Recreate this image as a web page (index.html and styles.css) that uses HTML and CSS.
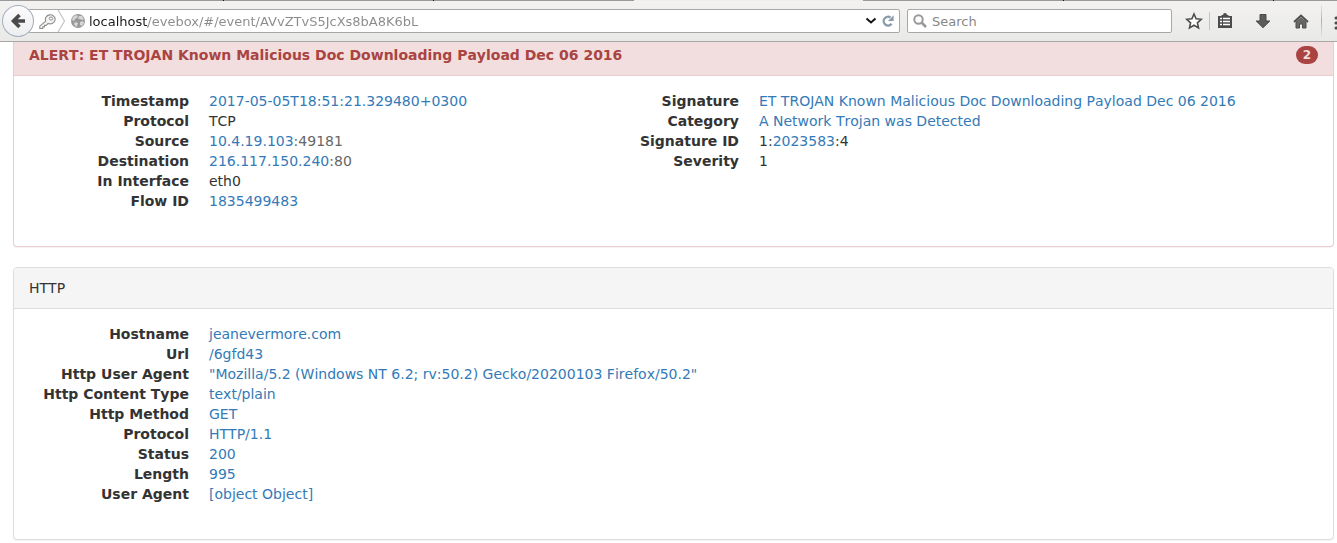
FILE: index.html
```html
<!DOCTYPE html>
<html lang="en">
<head>
<meta charset="utf-8">
<title>EveBox event</title>
<link rel="stylesheet" href="styles.css">
</head>
<body>
<header class="chrome">
  <div class="tabstrip"><span class="tab"></span><span class="tab"></span><span class="tab tab-before"></span><span class="tab tab-active"></span><span class="tab tab-after"></span><span class="tab"></span><span class="tab tab-last"></span></div>
  <div class="toolbar">
    <button class="back" aria-label="Back"><svg width="32" height="32" viewBox="0 0 32 32"><path d="M23 16H12M17.500 10l-6 6 6 6" fill="none" stroke="#4a4a4a" stroke-width="3.600"/></svg></button>
    <div class="urlbar">
      <svg class="key" width="18" height="18" viewBox="0 0 18 18"><path d="M7.800 9.200 1.800 14.200v2.300h3v-1.600h1.700v-1.500h1.700l2-2a4.900 4.500 0 1 0-2.400-2.200Z" fill="#f3f3f3" stroke="#8c8c8c" stroke-width="1.100" stroke-linejoin="round"/><ellipse cx="13" cy="6.500" rx="1.700" ry="1.500" fill="#fff" stroke="#8c8c8c"/></svg>
      <svg class="chevron" width="9" height="22" viewBox="0 0 9 22"><path d="M1 0l6.500 11L1 22" fill="none" stroke="#c4c4c4" stroke-width="1.200"/></svg>
      <svg class="globe" width="14" height="14" viewBox="0 0 14 14"><circle cx="7" cy="7" r="7" fill="#999"/><path d="M2 3l3-2 2 1-1 2-2 1-1 2-2-1zM8 2l3 0 2 3-2 1-2-1-2 0zM4 8l3 1-1 3-1 1-2-3zM9 8l3-1 1 2-2 3-2-1z" fill="#d6d6d6"/></svg>
      <input class="url" type="text" aria-label="Address" value="localhost/evebox/#/event/AVvZTvS5JcXs8bA8K6bL">
      <button class="mini" aria-label="History"><svg width="12" height="8" viewBox="0 0 12 8"><path d="M1.500 1.500l4.500 4 4.500-4" fill="none" stroke="#111" stroke-width="1.900"/></svg></button>
      <button class="mini" aria-label="Reload"><svg width="12" height="12" viewBox="0 0 12 12"><path d="M9.600 8.800A4.400 4.400 0 1 1 8.500 2.500" fill="none" stroke="#8c9bab" stroke-width="2.300"/><path d="M11.600.3v5.600H6z" fill="#8c9bab"/></svg></button>
    </div>
    <div class="searchbox">
      <svg width="14" height="14" viewBox="0 0 14 14"><circle cx="5.500" cy="5.500" r="4.200" fill="none" stroke="#999" stroke-width="2"/><path d="M8.500 8.500l4.500 4.500" stroke="#999" stroke-width="2.600"/></svg>
      <input class="search" type="text" placeholder="Search" aria-label="Search">
    </div>
    <button class="tool tool-star" aria-label="Bookmark"><svg width="18" height="18" viewBox="0 0 18 18"><path d="M9 2l2.100 4.800 5.200.5-3.900 3.500 1.100 5.100L9 13.200l-4.500 2.700 1.100-5.100L1.700 7.300l5.200-.5z" fill="#fff" stroke="#4c4c4c" stroke-width="1.600"/></svg></button>
    <span class="sep"></span>
    <button class="tool tool-list" aria-label="Bookmarks list"><svg width="16" height="16" viewBox="0 0 16 16"><path d="M1 3h3.500V2H6a2 2 0 0 1 4 0h1.500v1H15v12H1z" fill="#4c4c4c"/><path d="M3 5.500h2M6 5.500h7M3 8.500h2M6 8.500h7M3 11.500h2M6 11.500h7" stroke="#fff" stroke-width="1.500"/></svg></button>
    <button class="tool" aria-label="Downloads"><svg width="16" height="16" viewBox="0 0 16 16"><path d="M5 1.500h6V8h3.800L8 14.700 1.200 8H5z" fill="#5c5c5c" stroke="#484848"/></svg></button>
    <button class="tool" aria-label="Home"><svg width="16" height="16" viewBox="0 0 16 16"><path d="M1 9l7-6.500L15 9" fill="none" stroke="#4c4c4c" stroke-width="1.800"/><path d="M3 9.200l5-4.500 5 4.500V15H9.500v-4h-3v4H3z" fill="#666" stroke="#4c4c4c"/></svg></button>
    <span class="sep sep-tall"></span>
    <button class="menu" aria-label="Menu"><svg width="18" height="16" viewBox="0 0 18 16"><path d="M2 3h14M2 8h14M2 13h14" stroke="#4c4c4c" stroke-width="3" stroke-linecap="round"/></svg></button>
  </div>
</header>
<main class="content">
  <section class="panel panel-danger">
    <div class="panel-heading"><strong>ALERT: ET TROJAN Known Malicious Doc Downloading Payload Dec 06 2016</strong><span class="badge">2</span></div>
    <div class="panel-body columns">
      <dl class="fields">
        <dt>Timestamp</dt><dd><a href="#">2017-05-05T18:51:21.329480+0300</a></dd>
        <dt>Protocol</dt><dd>TCP</dd>
        <dt>Source</dt><dd class="muted"><a href="#">10.4.19.103</a>:<a class="port" href="#">49181</a></dd>
        <dt>Destination</dt><dd class="muted"><a href="#">216.117.150.240</a>:<a class="port" href="#">80</a></dd>
        <dt>In Interface</dt><dd>eth0</dd>
        <dt>Flow ID</dt><dd><a href="#">1835499483</a></dd>
      </dl>
      <dl class="fields">
        <dt>Signature</dt><dd><a href="#">ET TROJAN Known Malicious Doc Downloading Payload Dec 06 2016</a></dd>
        <dt>Category</dt><dd><a href="#">A Network Trojan was Detected</a></dd>
        <dt>Signature ID</dt><dd>1:<a href="#">2023583</a>:4</dd>
        <dt>Severity</dt><dd>1</dd>
      </dl>
    </div>
  </section>
  <section class="panel">
    <div class="panel-heading">HTTP</div>
    <div class="panel-body">
      <dl class="fields">
        <dt>Hostname</dt><dd><a href="#">jeanevermore.com</a></dd>
        <dt>Url</dt><dd><a href="#">/6gfd43</a></dd>
        <dt>Http User Agent</dt><dd><a href="#">"Mozilla/5.2 (Windows NT 6.2; rv:50.2) Gecko/20200103 Firefox/50.2"</a></dd>
        <dt>Http Content Type</dt><dd><a href="#">text/plain</a></dd>
        <dt>Http Method</dt><dd><a href="#">GET</a></dd>
        <dt>Protocol</dt><dd><a href="#">HTTP/1.1</a></dd>
        <dt>Status</dt><dd><a href="#">200</a></dd>
        <dt>Length</dt><dd><a href="#">995</a></dd>
        <dt>User Agent</dt><dd><a href="#">[object Object]</a></dd>
      </dl>
    </div>
  </section>
</main>
</body>
</html>
```
FILE: styles.css
```css
* { box-sizing: border-box; }
body {
  margin: 0;
  background: #fff;
  color: #333;
  font: 14px/20px "DejaVu Sans", Verdana, sans-serif;
}
button { padding: 0; border: 0; background: none; }
svg { display: block; flex: none; }

.chrome {
  background: linear-gradient(#f3f2f0, #e9e9e8);
  border-bottom: 1px solid #a9a6a6;
}
.tabstrip { display: flex; height: 1px; background: #999; }
.tab { width: 210px; border-right: 1px solid #111; }
.tab:first-child { width: 224px; }
.tab-before { width: 200px; border-right: 0; }
.tab-active { width: 229px; border: 0; background: #efeeed; }
.tab-after { width: 201px; }
.tab-last { flex: 1; border: 0; }
.toolbar { display: flex; align-items: center; padding: 4px 0 4px 2px; }

.back {
  position: relative;
  flex: none;
  width: 32px;
  height: 32px;
  border-radius: 50%;
  background: linear-gradient(#fcfcfd, #ecedef);
  box-shadow: inset 0 0 0 1px #a3aebb;
}
.urlbar, .searchbox {
  display: flex;
  align-items: center;
  height: 24px;
  background: #fff;
  border: 1px solid #aaa8a6;
  border-radius: 2px;
}
.urlbar { flex: 1; min-width: 0; margin-left: -6px; padding-left: 9px; }
.chevron { margin-left: 1px; }
.globe { margin-left: 5px; }
.url, .search {
  flex: 1;
  min-width: 0;
  padding: 1px 0 0;
  border: 0;
  outline: 0;
  font: 13px/20px "DejaVu Sans", Verdana, sans-serif;
}
.url {
  margin-left: 4px;
  color: #8a8a8a;
  background: linear-gradient(90deg, #1a1a1a 59px, #8a8a8a 59px);
  -webkit-background-clip: text;
  background-clip: text;
  -webkit-text-fill-color: transparent;
}
.mini { display: grid; place-items: center; width: 16px; height: 20px; }
.mini:last-child { margin: 0 3px 0 1px; }
.searchbox { width: 265px; margin-left: 7px; padding-left: 5px; }
.search { margin-left: 5px; color: #333; background: none; }
.search::placeholder { color: #888; opacity: 1; }
.tool { display: grid; place-items: center; flex: none; width: 38px; height: 24px; }
.tool-star { width: 31px; margin-left: 6px; }
.tool-list { width: 30px; margin-right: 4px; }
.sep { flex: none; width: 1px; height: 18px; background: #c4c4c4; }
.sep-tall { height: 32px; margin-left: 1px; background: linear-gradient(#e4e5e7, #a9b0b8, #e4e5e7); }
.menu { flex: none; width: 15px; height: 24px; padding: 3px 0 0 12px; overflow: hidden; }

.content { padding: 0 3px 0 13px; }
.panel {
  margin-bottom: 20px;
  background: #fff;
  border: 1px solid #ddd;
  border-radius: 4px;
  box-shadow: 0 1px 1px rgba(0, 0, 0, .05);
}
.panel-heading {
  display: flex;
  justify-content: space-between;
  align-items: center;
  padding: 10px 15px;
  background: #f5f5f5;
  border-bottom: 1px solid #ddd;
  border-radius: 3px 3px 0 0;
}
.panel-danger { border-color: #ebccd1; border-top: 0; border-radius: 0 0 4px 4px; }
.panel-danger .panel-heading {
  padding-top: 3px;
  color: #a94442;
  background: #f2dede;
  border-color: #ebccd1;
  border-radius: 0;
}
.badge {
  padding: 3px 7px;
  color: #f2dede;
  background: #a94442;
  border-radius: 10px;
  font-size: 12px;
  font-weight: bold;
  line-height: 12px;
}
.panel-body { padding: 15px; font-kerning: none; }
.panel-heading { font-kerning: none; }
.columns { display: grid; grid-template-columns: 550fr 739fr; }
.fields {
  display: grid;
  grid-template-columns: 160px 1fr;
  column-gap: 20px;
  align-content: start;
  margin: 0 0 20px;
}
dt { font-weight: bold; text-align: right; }
dd { margin: 0; }
a { color: #337ab7; text-decoration: none; }
.muted, .port { color: #666; }
```
